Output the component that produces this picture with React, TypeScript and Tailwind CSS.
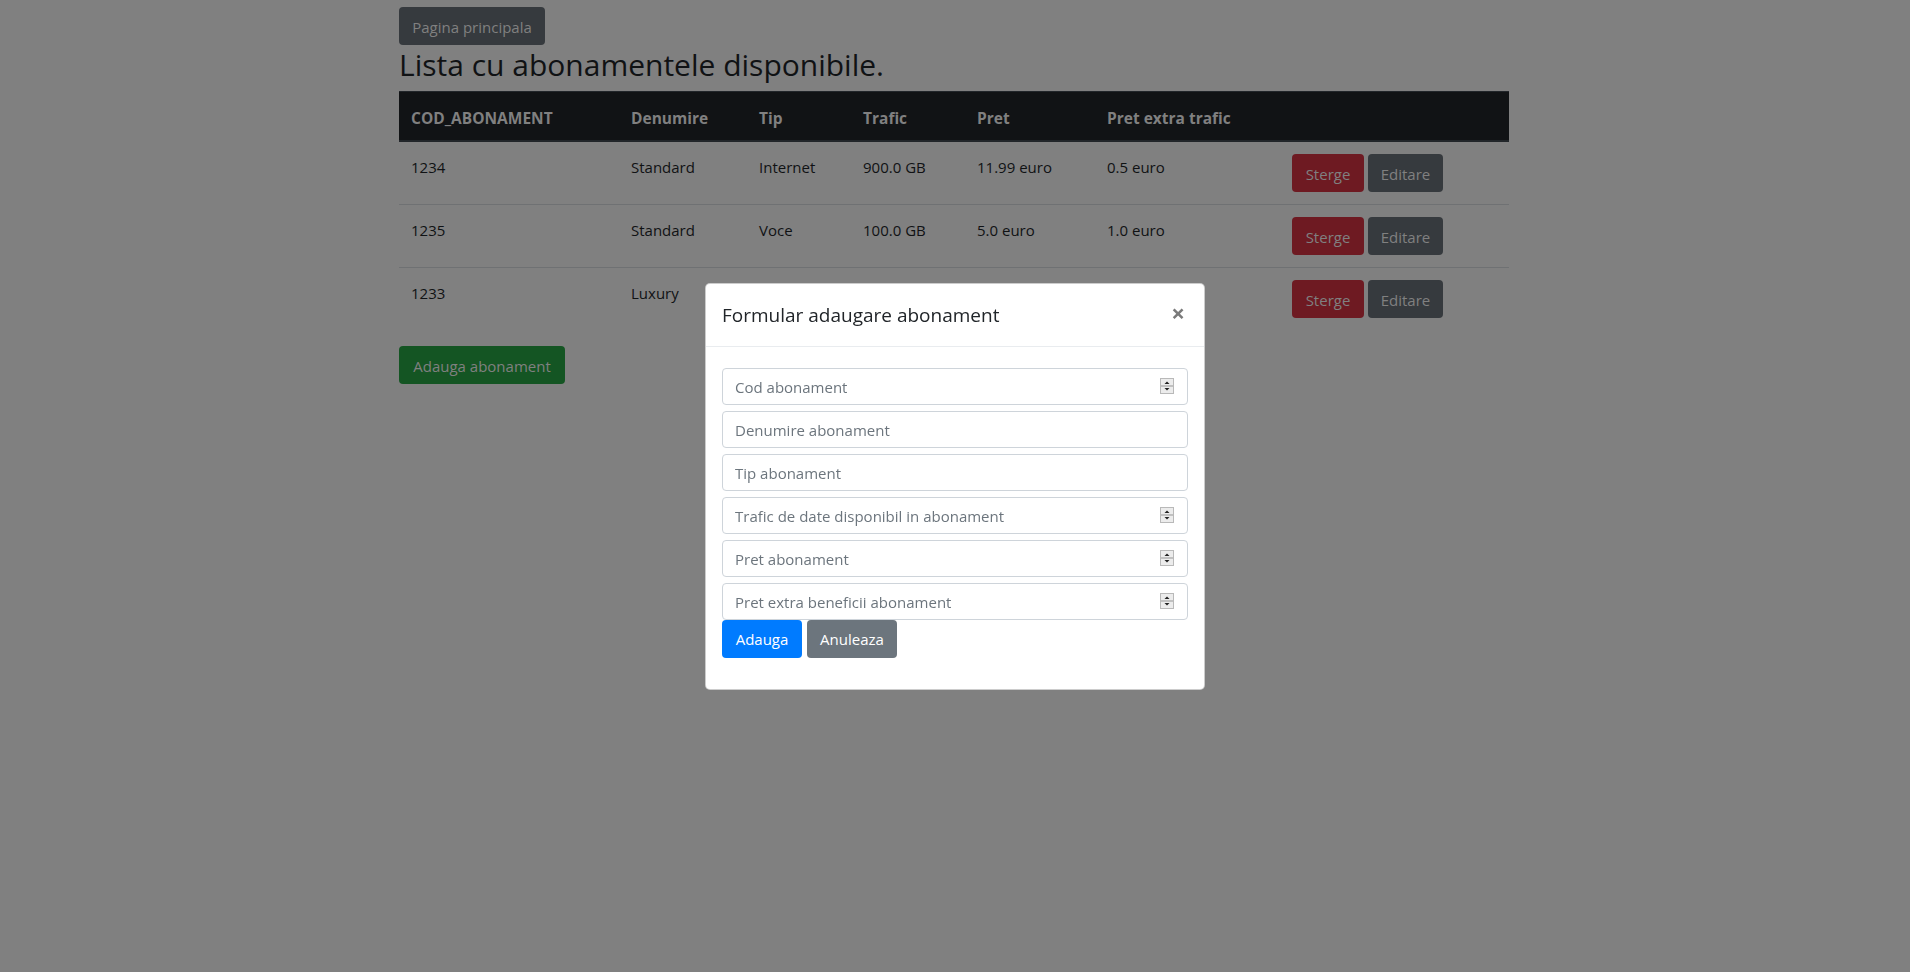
import React from "react";

type Row = {
  cod: string;
  den: string;
  tip: string;
  trafic: string;
  pret: string;
  extra: string;
};

const rows: Row[] = [
  { cod: "1234", den: "Standard", tip: "Internet", trafic: "900.0 GB", pret: "11.99 euro", extra: "0.5 euro" },
  { cod: "1235", den: "Standard", tip: "Voce", trafic: "100.0 GB", pret: "5.0 euro", extra: "1.0 euro" },
  { cod: "1233", den: "Luxury", tip: "", trafic: "", pret: "", extra: "" },
];

function Spinner() {
  return (
    <svg width="14" height="16" viewBox="0 0 14 16" className="shrink-0">
      <rect x="0.5" y="0.5" width="13" height="15" fill="#ececec" stroke="#b9b9b9" />
      <line x1="1" y1="8" x2="13" y2="8" stroke="#959595" />
      <path d="M4.5 6 L9.5 6 L7 3.5 Z" fill="#222" />
      <path d="M4.5 10 L9.5 10 L7 12.5 Z" fill="#222" />
    </svg>
  );
}

function Field({ placeholder, spin }: { placeholder: string; spin?: boolean }) {
  return (
    <div className="flex h-[37px] items-center rounded-[4px] border border-[#ced4da] bg-white pl-3 pr-[13px]">
      <input
        readOnly
        placeholder={placeholder}
        className="min-w-0 flex-1 bg-transparent pt-[1px] text-[15px] leading-6 text-[#495057] outline-none placeholder:text-[#6c757d]"
      />
      {spin && <Spinner />}
    </div>
  );
}

export default function App() {
  const thCls =
    "border-t border-b-2 border-[#22262a] px-3 pt-[14px] pb-[10px] text-left align-bottom text-[15.5px] font-bold leading-6 text-[#808080]";
  return (
    <div className="relative min-h-[972px] bg-[#808080] font-['Open_Sans',sans-serif] text-[15px] leading-6 text-[#101214]">
      <div className="ml-[399px] w-[1110px] pt-[7px]">
        <button className="h-[38px] w-[146px] rounded-[4px] bg-[#363a3e] pt-[1px] text-[15px] text-[#808080]">
          Pagina principala
        </button>
        <h2 className="mb-2 pt-[1px] text-[30px] font-medium leading-[37.4px] text-[#101214]">
          Lista cu abonamentele disponibile.
        </h2>
        <table className="mb-4 w-[1110px] table-fixed border-separate border-spacing-0">
          <colgroup>
            <col className="w-[220px]" />
            <col className="w-[128px]" />
            <col className="w-[104px]" />
            <col className="w-[114px]" />
            <col className="w-[130px]" />
            <col className="w-[185px]" />
            <col className="w-[229px]" />
          </colgroup>
          <thead>
            <tr className="bg-[#111315]">
              <th className={thCls}>COD_ABONAMENT</th>
              <th className={thCls}>Denumire</th>
              <th className={thCls}>Tip</th>
              <th className={thCls}>Trafic</th>
              <th className={thCls}>Pret</th>
              <th className={thCls}>Pret extra trafic</th>
              <th className={thCls}></th>
            </tr>
          </thead>
          <tbody>
            {rows.map((r, i) => {
              const border = i === 0 ? "" : "border-t border-[#6f7173] ";
              const td = border + "px-3 pt-[13px] pb-[11px] align-top leading-6 text-[#101214]";
              const tdBtn = border + "px-3 py-3 align-top leading-6";
              return (
                <tr key={r.cod}>
                  <td className={td}>{r.cod}</td>
                  <td className={td}>{r.den}</td>
                  <td className={td}>{r.tip}</td>
                  <td className={td}>{r.trafic}</td>
                  <td className={td}>{r.pret}</td>
                  <td className={td}>{r.extra}</td>
                  <td className={tdBtn}>
                    <div className="flex gap-[4px]">
                      <button className="h-[38px] w-[72px] rounded-[4px] bg-[#6e1a22] pt-[2px] text-[15px] text-[#808080]">
                        Sterge
                      </button>
                      <button className="h-[38px] w-[75px] rounded-[4px] bg-[#363a3e] pt-[2px] text-[15px] text-[#808080]">
                        Editare
                      </button>
                    </div>
                  </td>
                </tr>
              );
            })}
          </tbody>
        </table>
        <button className="h-[38px] w-[166px] rounded-[4px] bg-[#145523] pt-[1px] text-[15px] text-[#808080]">
          Adauga abonament
        </button>
      </div>

      <div className="fixed inset-0 flex items-center justify-center">
        <div className="w-[500px] rounded-[5px] border border-black/20 bg-white">
          <div className="flex items-start justify-between border-b border-[#e9ecef] px-4 py-4">
            <h5 className="text-[19px] font-medium leading-[30px] text-[#212529]">
              Formular adaugare abonament
            </h5>
            <button className="mr-[3px] mt-[1px] text-[24px] font-bold leading-[24px] text-[#7a7a7a]">
              ×
            </button>
          </div>
          <div className="px-4 pb-[31px] pt-[21px]">
            <div className="flex flex-col gap-[6px]">
              <Field placeholder="Cod abonament" spin />
              <Field placeholder="Denumire abonament" />
              <Field placeholder="Tip abonament" />
              <Field placeholder="Trafic de date disponibil in abonament" spin />
              <Field placeholder="Pret abonament" spin />
              <Field placeholder="Pret extra beneficii abonament" spin />
            </div>
            <div className="flex gap-[5px]">
              <button className="h-[38px] w-[80px] rounded-[4px] bg-[#007bff] pt-[1px] text-[15px] text-white">
                Adauga
              </button>
              <button className="h-[38px] w-[90px] rounded-[4px] bg-[#6c757d] pt-[1px] text-[15px] text-white">
                Anuleaza
              </button>
            </div>
          </div>
        </div>
      </div>
    </div>
  );
}
